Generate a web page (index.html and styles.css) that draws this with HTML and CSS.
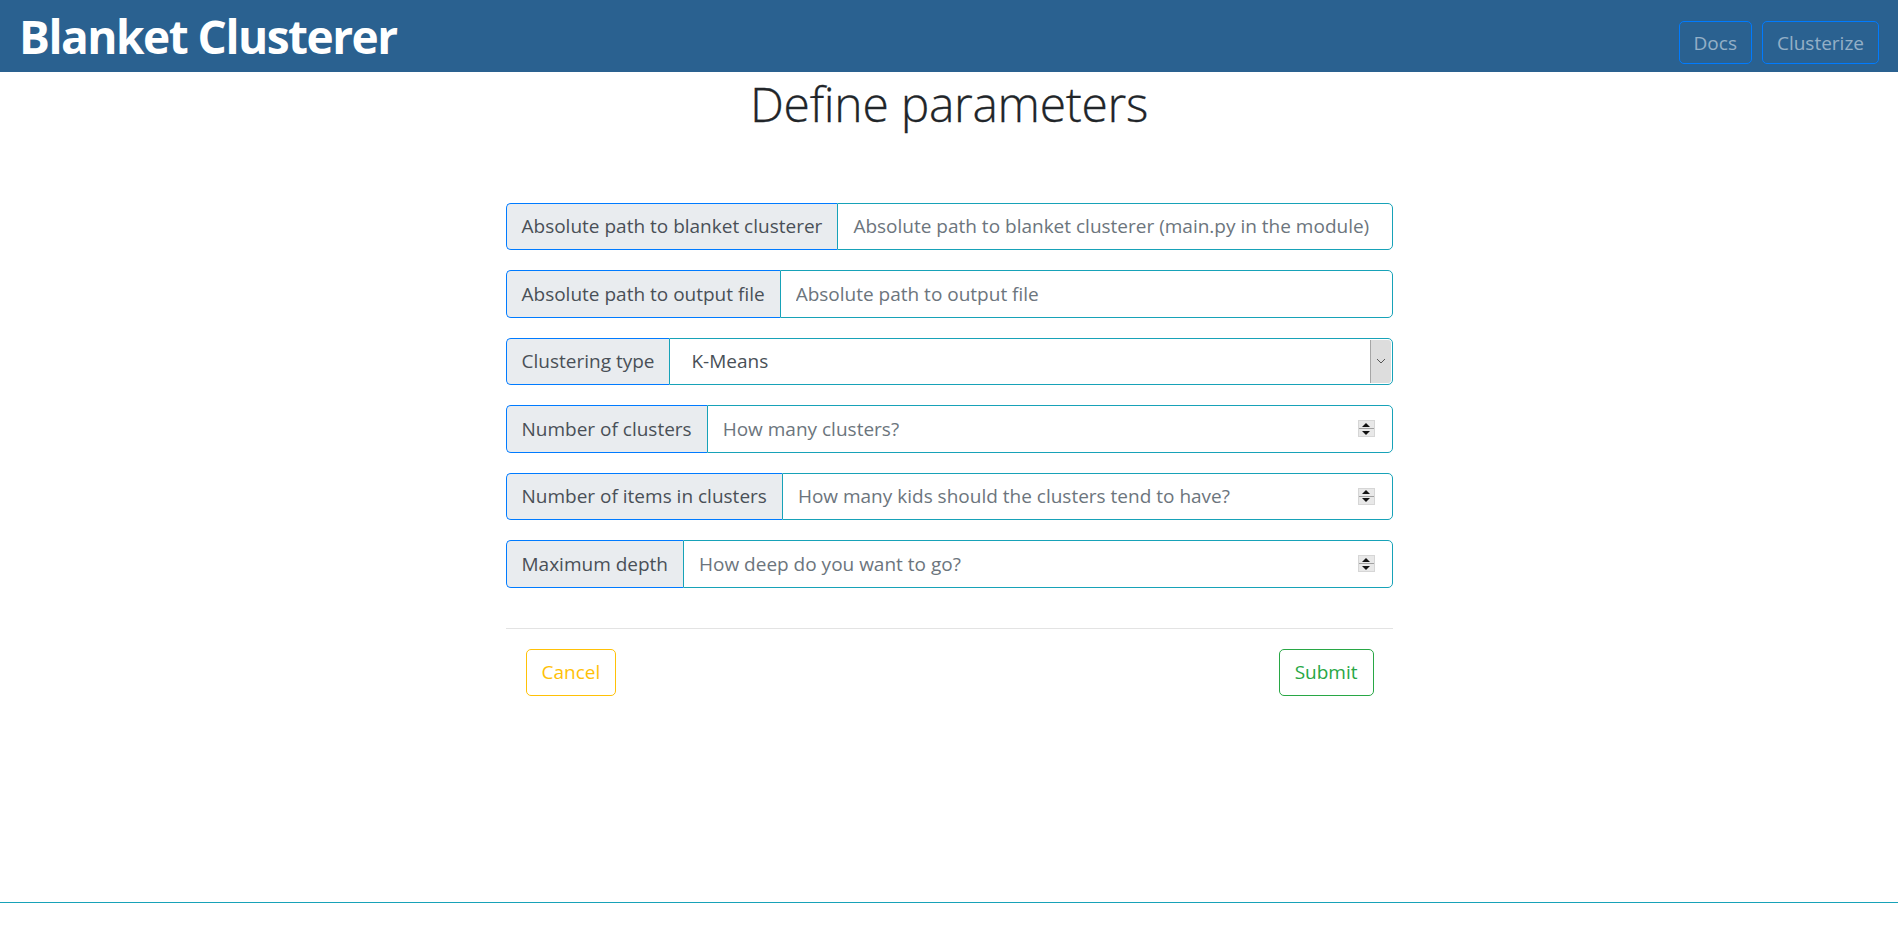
FILE: index.html
```html
<!DOCTYPE html>
<html lang="en">
<head>
<meta charset="utf-8">
<title>Blanket Clusterer</title>
<link rel="stylesheet" href="styles.css">
</head>
<body>
<nav class="navbar">
  <span class="brand">Blanket Clusterer</span>
  <div class="nav-buttons">
    <a class="nav-btn">Docs</a>
    <a class="nav-btn">Clusterize</a>
  </div>
</nav>
<main class="main">
  <h1 class="title">Define parameters</h1>
  <form class="form">
    <div class="group">
      <span class="label">Absolute path to blanket clusterer</span>
      <div class="field"><input class="input" type="text" placeholder="Absolute path to blanket clusterer (main.py in the module)"></div>
    </div>
    <div class="group">
      <span class="label">Absolute path to output file</span>
      <div class="field"><input class="input" type="text" placeholder="Absolute path to output file"></div>
    </div>
    <div class="group">
      <span class="label">Clustering type</span>
      <div class="field select-field">
        <span class="select-value">K-Means</span>
        <span class="select-arrow"><svg width="10" height="6" viewBox="0 0 10 6"><path d="M1 1 L5 5 L9 1" fill="none" stroke="#555" stroke-width="1"/></svg></span>
      </div>
    </div>
    <div class="group">
      <span class="label">Number of clusters</span>
      <div class="field"><input class="input" type="text" placeholder="How many clusters?"><span class="spin"><span class="spin-up"></span><span class="spin-down"></span></span></div>
    </div>
    <div class="group">
      <span class="label">Number of items in clusters</span>
      <div class="field"><input class="input" type="text" placeholder="How many kids should the clusters tend to have?"><span class="spin"><span class="spin-up"></span><span class="spin-down"></span></span></div>
    </div>
    <div class="group">
      <span class="label">Maximum depth</span>
      <div class="field"><input class="input" type="text" placeholder="How deep do you want to go?"><span class="spin"><span class="spin-up"></span><span class="spin-down"></span></span></div>
    </div>
    <hr class="divider">
    <div class="actions">
      <button type="button" class="btn btn-cancel">Cancel</button>
      <button type="button" class="btn btn-submit">Submit</button>
    </div>
  </form>
</main>
<footer class="footer"></footer>
</body>
</html>
```
FILE: styles.css
```css
html, body {
  margin: 0;
  padding: 0;
}
body {
  font-family: "Open Sans", "Noto Sans", sans-serif;
  color: #212529;
  background: #fff;
  min-height: 100vh;
  display: flex;
  flex-direction: column;
}
.navbar {
  height: 72px;
  background: #2a6190;
  display: flex;
  align-items: center;
  justify-content: space-between;
  padding: 0 19px 0 19px;
  box-sizing: border-box;
}
.brand {
  color: #fff;
  font-size: 46px;
  font-weight: 700;
  letter-spacing: -1.5px;
  line-height: 1;
}
.nav-buttons {
  display: flex;
  gap: 10px;
  margin-top: 13px;
}
.nav-btn {
  display: flex;
  align-items: center;
  justify-content: center;
  height: 43px;
  box-sizing: border-box;
  padding: 0 14px;
  border: 1px solid #007bff;
  border-radius: 5px;
  color: rgba(255,255,255,0.5);
  font-size: 19px;
}
.main {
  display: flex;
  flex-direction: column;
  align-items: center;
}
.title {
  margin: 3px 0 0 0;
  font-size: 48px;
  font-weight: 300;
  line-height: 1.2;
  color: #212529;
  letter-spacing: -0.3px;
  -webkit-text-stroke: 0.3px #212529;
}
.form {
  width: 887px;
  margin-top: 70px;
  display: flex;
  flex-direction: column;
}
.group {
  display: flex;
  height: 47.5px;
  margin-bottom: 20px;
  font-size: 19px;
}
.label {
  display: flex;
  align-items: center;
  padding: 0 15px;
  background: #e9ecef;
  color: #495057;
  border: 1px solid #007bff;
  border-right: none;
  border-radius: 5px 0 0 5px;
  white-space: nowrap;
}
.field {
  flex: 1;
  display: flex;
  align-items: center;
  border: 1px solid #17a2b8;
  border-radius: 0 5px 5px 0;
  background: #fff;
  min-width: 0;
}
.input {
  flex: 1;
  min-width: 0;
  border: none;
  outline: none;
  background: transparent;
  font: inherit;
  color: #495057;
  padding: 0 15px;
  height: 100%;
}
.input::placeholder {
  color: #6c757d;
  opacity: 1;
}
.select-field {
  justify-content: space-between;
}
.select-value {
  padding-left: 21px;
  color: #495057;
}
.select-arrow {
  align-self: stretch;
  width: 20px;
  margin: 1px 1px 1px 0;
  background: #dddddd;
  border-left: 1px solid #a6a6a6;
  border-radius: 0 3px 3px 0;
  display: flex;
  align-items: center;
  justify-content: center;
}
.spin {
  display: flex;
  flex-direction: column;
  width: 17px;
  height: 17px;
  margin-right: 17px;
  background: #e8e8e8;
  border: 1px solid #d6d6d6;
  box-sizing: border-box;
}
.spin-up, .spin-down {
  flex: 1;
  position: relative;
}
.spin-up {
  border-bottom: 1px solid #a0a0a0;
}
.spin-up::after, .spin-down::after {
  content: "";
  position: absolute;
  left: 50%;
  top: 50%;
  transform: translate(-50%, -50%);
  border-left: 4px solid transparent;
  border-right: 4px solid transparent;
}
.spin-up::after {
  border-bottom: 4px solid #111;
}
.spin-down::after {
  border-top: 4px solid #111;
}
.divider {
  width: 100%;
  margin: 20px 0 20px 0;
  border: none;
  border-top: 1px solid #e3e3e3;
}
.actions {
  display: flex;
  justify-content: space-between;
  padding: 0 19px 0 20px;
}
.btn {
  height: 47px;
  padding: 0 15px;
  border-radius: 5px;
  background: #fff;
  font-family: inherit;
  font-size: 19px;
  cursor: pointer;
}
.btn-cancel {
  border: 1px solid #ffc107;
  color: #ffc107;
}
.btn-submit {
  border: 1px solid #28a745;
  color: #28a745;
}
.footer {
  margin-top: auto;
  height: 34px;
  border-top: 1px solid #17a2b8;
}
```
